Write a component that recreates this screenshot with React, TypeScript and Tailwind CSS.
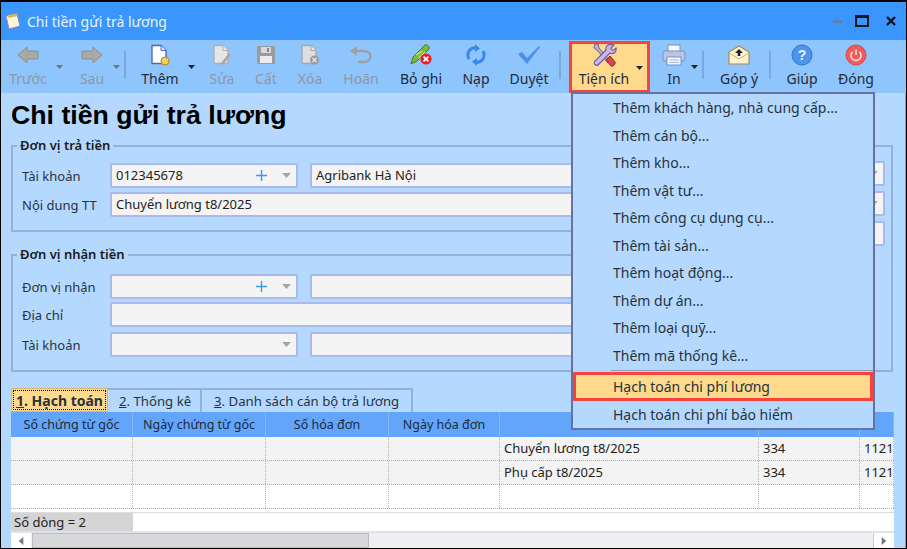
import type { ReactNode } from "react";

const GRAY = "#a3a3a3";

function ArrowIcon({ flip }: { flip?: boolean }) {
  return (
    <svg width="22" height="18" viewBox="0 0 22 18" className={flip ? "-scale-x-100" : ""}>
      <path d="M1 9 L10 1 V5 H21 V13 H10 V17 Z" fill="#a8a8a4" stroke="#8f8f8c" strokeWidth="1" />
    </svg>
  );
}

function DocIcon({ stroke, fill, children }: { stroke: string; fill: string; children?: ReactNode }) {
  return (
    <svg width="22" height="22" viewBox="0 0 22 22">
      <path d="M3 1.5 H12 L17 6.5 V19.5 H3 Z" fill={fill} stroke={stroke} strokeWidth="1.4" />
      <path d="M12 1.5 V6.5 H17" fill="#e8e8e8" stroke={stroke} strokeWidth="1" />
      {children}
    </svg>
  );
}

function FloppyIcon() {
  return (
    <svg width="20" height="20" viewBox="0 0 20 20">
      <rect x="1" y="1" width="18" height="18" rx="1" fill="#9b9b9b" />
      <rect x="5" y="2" width="10" height="6" fill="#d8d8d8" />
      <rect x="11" y="3" width="2" height="4" fill="#8a8a8a" />
      <rect x="4" y="11" width="12" height="7" fill="#ececec" />
    </svg>
  );
}

function UndoIcon() {
  return (
    <svg width="24" height="20" viewBox="0 0 24 20" fill="none">
      <path d="M3 6 H15 C24 6 23 17 15 17 H9" stroke="#a0a0a0" strokeWidth="2.4" />
      <path d="M1 6 L8 1 V11 Z" fill="#a0a0a0" />
    </svg>
  );
}

function SaveOffIcon() {
  return (
    <svg width="24" height="24" viewBox="0 0 24 24">
      <path d="M2 21 L4 14 L16 2 C18 1 21 4 20 6 L8 18 Z" fill="#7dbb36" stroke="#3f7d1c" strokeWidth="1" />
      <path d="M7 12 L13 8 M10 15 L16 9" stroke="#cfe88f" strokeWidth="1.2" />
      <circle cx="17" cy="16" r="5.6" fill="#e8202a" />
      <path d="M14.6 13.6 L19.4 18.4 M19.4 13.6 L14.6 18.4" stroke="#fff" strokeWidth="1.7" />
    </svg>
  );
}

function ReloadIcon() {
  return (
    <svg width="22" height="22" viewBox="0 0 22 22" fill="none">
      <path d="M4 15 C1 9 5 3 11 4" stroke="#3a88ea" strokeWidth="3" />
      <path d="M18 7 C21 13 17 19 11 18" stroke="#3a88ea" strokeWidth="3" />
      <path d="M10 0 L15 4.5 L10 8 Z M12 14 L7 17.5 L12 22 Z" fill="#3a88ea" />
    </svg>
  );
}

function CheckIcon() {
  return (
    <svg width="24" height="20" viewBox="0 0 24 20">
      <path d="M1 9 L5 7 L10 13 L22 1 L23 2 L10 19 Z" fill="#4a90e8" />
    </svg>
  );
}

function ToolsIcon() {
  return (
    <svg width="26" height="24" viewBox="0 0 26 24">
      <path d="M4 1 L7 1 L8 5 L19 18 L17 20 L6 7 L3 5 Z" fill="#b9b4d6" stroke="#6a5a9c" strokeWidth="1" />
      <path d="M15 17 L19 13 L24 19 C25 21 22 24 20 23 Z" fill="#d9454f" stroke="#8a2730" strokeWidth="1" />
      <path d="M23 2 L20 5 L21 7 L23 7 L25 5 C26 9 22 12 19 10 L8 21 C5 24 2 21 4 18 L15 7 C14 3 18 0 23 2 Z" fill="#c6b9e6" stroke="#6f5aa3" strokeWidth="1.1" />
    </svg>
  );
}

function PrinterIcon() {
  return (
    <svg width="24" height="22" viewBox="0 0 24 22">
      <rect x="6" y="1" width="12" height="7" fill="#f6f8fc" stroke="#7b8fc4" />
      <rect x="1" y="7" width="22" height="10" rx="2" fill="#b9c5e4" stroke="#7b8fc4" />
      <rect x="5" y="13" width="14" height="8" fill="#f6f8fc" stroke="#7b8fc4" />
      <path d="M7 16 H17 M7 18.500 H17" stroke="#a9b8da" />
    </svg>
  );
}

function EnvelopeIcon() {
  return (
    <svg width="22" height="20" viewBox="0 0 22 20">
      <path d="M1 7 L11 1 L21 7 V19 H1 Z" fill="#fdf3cf" stroke="#a78c52" strokeWidth="1.2" />
      <path d="M1 8 L11 14 L21 8" fill="none" stroke="#c9b27a" strokeWidth="1" />
      <path d="M11 4 L15 8 H12.300 V11 H9.700 V8 H7 Z" fill="#222" />
    </svg>
  );
}

function HelpIcon() {
  return (
    <svg width="22" height="22" viewBox="0 0 22 22">
      <circle cx="11" cy="11" r="10" fill="#4c94ec" stroke="#2f74cf" />
      <text x="11" y="16" textAnchor="middle" fontSize="14" fontFamily="Liberation Sans, sans-serif" fontWeight="700" fill="#e8f2ff">?</text>
    </svg>
  );
}

function PowerIcon() {
  return (
    <svg width="22" height="22" viewBox="0 0 22 22" fill="none">
      <circle cx="11" cy="11" r="10" fill="#ee5c5c" stroke="#d84545" />
      <path d="M7.600 7.800 A5 5 0 1 0 14.400 7.800" stroke="#ffe3e3" strokeWidth="1.500" />
      <path d="M11 5.500 V11" stroke="#ffe3e3" strokeWidth="1.500" />
    </svg>
  );
}

function Caret({ className, color = "#222" }: { className?: string; color?: string }) {
  return (
    <svg width="7" height="4" viewBox="0 0 7 4" className={className}>
      <path d="M0 0 H7 L3.500 4 Z" fill={color} />
    </svg>
  );
}

function Tool({
  label,
  icon,
  className,
  disabled,
  caretClass,
}: {
  label: string;
  icon: ReactNode;
  className: string;
  disabled?: boolean;
  caretClass?: string;
}) {
  return (
    <div className={`relative flex shrink-0 flex-col items-center ${className}`}>
      <div className="flex h-[26px] items-center pt-[3px]">{icon}</div>
      <span className={`mt-[4px] whitespace-nowrap text-[14px] leading-[18px] ${disabled ? "text-[#8c98a6]" : "text-[#1f2a36]"}`}>{label}</span>
      {caretClass && <Caret color={disabled ? "#6f7680" : "#222"} className={`absolute top-[25px] ${caretClass}`} />}
    </div>
  );
}

function Sep({ className }: { className: string }) {
  return <div className={`mt-[11px] h-[28px] w-[2px] shrink-0 bg-[#79a8dc] ${className}`} />;
}

function Toolbar() {
  return (
    <div className="flex h-[53px] shrink-0 bg-[#8fc5fd]">
      <Tool label="Trước" icon={<ArrowIcon />} className="w-[54px]" disabled caretClass="right-[-8px]" />
      <Tool label="Sau" icon={<ArrowIcon flip />} className="ml-[15px] w-[44px]" disabled caretClass="right-[-6px]" />
      <Sep className="ml-[10px]" />
      <Tool
        label="Thêm"
        icon={
          <DocIcon stroke="#4d69b8" fill="#fff">
            <circle cx="16" cy="17" r="4" fill="#f4cf5b" stroke="#a98a2a" />
          </DocIcon>
        }
        className="ml-[9px] w-[50px]"
        caretClass="right-[-10px]"
      />
      <Tool
        label="Sửa"
        icon={
          <DocIcon stroke="#b0b0b0" fill="#e6e6e6">
            <path d="M10 19 L18 9 L20 11 L12 21 Z" fill="#a8a8a8" />
          </DocIcon>
        }
        className="ml-[15px] w-[44px]"
        disabled
      />
      <Tool label="Cất" icon={<FloppyIcon />} className="w-[44px]" disabled />
      <Tool
        label="Xóa"
        icon={
          <DocIcon stroke="#a8a8a8" fill="#dedede">
            <circle cx="15.500" cy="16" r="4.500" fill="#9c9c9c" />
            <path d="M13.500 14 L17.500 18 M17.500 14 L13.500 18" stroke="#eee" strokeWidth="1.200" />
          </DocIcon>
        }
        className="w-[44px]"
        disabled
      />
      <Tool label="Hoãn" icon={<UndoIcon />} className="w-[58px]" disabled />
      <Tool label="Bỏ ghi" icon={<SaveOffIcon />} className="w-[62px]" />
      <Tool label="Nạp" icon={<ReloadIcon />} className="w-[48px]" />
      <Tool label="Duyệt" icon={<CheckIcon />} className="w-[58px]" />
      <Sep className="ml-px" />
      <div className="relative ml-[8px] mt-px flex w-[81px] shrink-0 flex-col items-center border-[3px] border-[#f9423f] bg-[#ffd98c] pr-[11px]">
        <div className="flex h-[22px] items-center">
          <ToolsIcon />
        </div>
        <span className="mt-[4px] whitespace-nowrap text-[14px] leading-[18px] text-[#1f2a36]">Tiện ích</span>
        <Caret className="absolute right-[4px] top-[22px]" />
      </div>
      <Tool label="In" icon={<PrinterIcon />} className="ml-[4px] w-[40px]" caretClass="right-[-4px]" />
      <Sep className="ml-[8px]" />
      <Tool label="Góp ý" icon={<EnvelopeIcon />} className="ml-[5px] w-[60px]" />
      <Sep className="" />
      <Tool label="Giúp" icon={<HelpIcon />} className="ml-[4px] w-[54px]" />
      <Tool label="Đóng" icon={<PowerIcon />} className="w-[54px]" />
    </div>
  );
}

function Field({ text, plus, caret, className }: { text?: string; plus?: boolean; caret?: boolean; className: string }) {
  return (
    <div className={`flex h-[25px] shrink-0 items-center rounded-[2px] border-2 border-[#a9b9ec] bg-[#f4f4f4] pl-[4px] text-[13px] text-[#222] ${className}`}>
      <span className="flex-1 truncate">{text}</span>
      {plus && (
        <svg width="11" height="11" viewBox="0 0 11 11" className="mr-[15px]">
          <path d="M5.500 0 V11 M0 5.500 H11" stroke="#3a9be8" strokeWidth="1.400" />
        </svg>
      )}
      {caret && <Caret color={GRAY} className="mr-[5px] h-[5px] w-[9px]" />}
    </div>
  );
}

function Label({ children }: { children: string }) {
  return <span className="w-[97px] shrink-0 pl-[9px] pt-[2px] text-[13px] text-[#27323d]">{children}</span>;
}

function Group({ title, className, children }: { title: string; className: string; children: ReactNode }) {
  return (
    <div className={`relative border-2 border-[#94b0e0] ${className}`}>
      <span className="absolute left-[4px] top-[-12px] bg-[#b5d9fe] px-[3px] text-[13px] font-semibold leading-[20px] text-[#1a1a1a]">{title}</span>
      {children}
    </div>
  );
}

const cols = ["Số chứng từ gốc", "Ngày chứng từ gốc", "Số hóa đơn", "Ngày hóa đơn", "", "", ""];
const rows = [
  ["", "", "", "", "Chuyển lương t8/2025", "334", "1121"],
  ["", "", "", "", "Phụ cấp t8/2025", "334", "1121"],
];
const gridCols = "grid grid-cols-[122px_133px_123px_111px_259px_101px_34px]";

function DataGrid() {
  return (
    <div className="flex w-[883px] flex-col bg-white">
      <div className={`${gridCols} h-[25px] bg-[#62a5fb]`}>
        {cols.map((c, i) => (
          <div key={i} className="truncate border-r border-[#86b6ee] text-center text-[12.500px] leading-[25px] text-[#1d2a3a]">
            {c}
          </div>
        ))}
      </div>
      {[...rows, ["", "", "", "", "", "", ""]].map((r, i) => (
        <div key={i} className={`${gridCols} h-[24px] border-b border-dotted border-[#aaa] ${i < 2 ? "bg-[#f3f3f3]" : "bg-white"}`}>
          {r.map((c, j) => (
            <div key={j} className="whitespace-nowrap border-r border-dotted border-[#b5b5b5] pl-[4px] text-[13px] leading-[23px] text-[#222]">
              {c}
            </div>
          ))}
        </div>
      ))}
      <div className="mt-[3px] flex h-[19px] border-t border-[#ddd] bg-white">
        <div className="w-[122px] bg-[#d4d4d4] pl-[3px] text-[13px] leading-[18px] text-[#222]">Số dòng = 2</div>
      </div>
      <div className="flex h-[17px] border-t-2 border-[#dbe4ee] bg-[#efefef]">
        <div className="flex w-[20px] items-center justify-center bg-white">
          <Caret color="#777" className="h-[6px] w-[8px] rotate-90" />
        </div>
        <div className="ml-px w-[337px] border border-[#bdbdbd] bg-[#d8d8d8]" />
        <div className="flex-1" />
        <div className="flex w-[21px] items-center justify-center border-l border-[#ccc] bg-white">
          <Caret color="#777" className="h-[6px] w-[8px] -rotate-90" />
        </div>
      </div>
    </div>
  );
}

const menuItems = [
  "Thêm khách hàng, nhà cung cấp...",
  "Thêm cán bộ...",
  "Thêm kho...",
  "Thêm vật tư...",
  "Thêm công cụ dụng cụ...",
  "Thêm tài sản...",
  "Thêm hoạt động...",
  "Thêm dự án...",
  "Thêm loại quỹ...",
  "Thêm mã thống kê...",
];

function DropMenu() {
  return (
    <div className="absolute left-[570px] top-[90px] flex h-[338px] w-[304px] flex-col border-2 border-[#66739f] bg-[#b5d9fe] text-[14px] text-[#27323d]">
      {menuItems.map((m) => (
        <div key={m} className="flex h-[27.500px] shrink-0 items-center pl-[40px]">
          {m}
        </div>
      ))}
      <div className="ml-[38px] mt-px h-px shrink-0 bg-[#8e9bb0]" />
      <div className="mt-px flex h-[29px] shrink-0 items-center border-[3px] border-[#f9423f] bg-[#ffd98c] pl-[37px]">Hạch toán chi phí lương</div>
      <div className="flex h-[26px] shrink-0 items-center pl-[40px]">Hạch toán chi phí bảo hiểm</div>
    </div>
  );
}

export default function App() {
  return (
    <div
      className="relative flex h-[549px] w-[907px] flex-col overflow-hidden border-x border-b border-t-2 border-black bg-[#b5d9fe]"
      style={{ fontFamily: '"Noto Sans", sans-serif' }}
    >
      {/* Title bar */}
      <div className="flex h-[38px] shrink-0 items-center bg-[#3a96fd] pl-[4px] text-[#eaf3ff]">
        <svg width="16" height="17" viewBox="0 0 16 17">
          <path d="M1 3 L12 1 L15 13 L4 16 Z" fill="#fdf6d8" stroke="#8f83c9" />
          <path d="M3 2 L12 0.500 L12.500 3 L3.500 5 Z" fill="#d9b84a" />
        </svg>
        <span className="ml-[6px] text-[14px]">Chi tiền gửi trả lương</span>
        <div className="ml-auto flex items-center">
          <div className="h-[3px] w-[9px] bg-[#5f7fa6]" />
          <div className="ml-[13px] h-[12px] w-[14px] border-2 border-t-[3px] border-[#10161f]" />
          <svg width="10" height="10" viewBox="0 0 10 10" className="ml-[17px] mr-[10px]">
            <path d="M1 1 L9 9 M9 1 L1 9" stroke="#0d1116" strokeWidth="2.400" />
          </svg>
        </div>
      </div>

      <Toolbar />

      {/* Form */}
      <div className="flex min-h-0 flex-1 flex-col border-r border-[#7c9bcb] pl-[10px]">
        <h1 className="h-[52px] shrink-0 pt-[5px] text-[26.700px] font-bold leading-[34px] text-black" style={{ fontFamily: '"Liberation Sans", sans-serif' }}>
          Chi tiền gửi trả lương
        </h1>

        <div className="flex h-[227px] shrink-0 gap-[4px]">
          <div className="flex w-[700px] shrink-0 flex-col">
            <Group title="Đơn vị trả tiền" className="h-[87px] pt-[16px]">
              <div className="flex items-center">
                <Label>Tài khoản</Label>
                <Field text="012345678" plus caret className="w-[188px]" />
                <Field text="Agribank Hà Nội" className="ml-[12px] w-[380px]" />
              </div>
              <div className="mt-[4px] flex items-center">
                <Label>Nội dung TT</Label>
                <Field text="Chuyển lương t8/2025" className="w-[580px]" />
              </div>
            </Group>
            <Group title="Đơn vị nhận tiền" className="mt-[22px] h-[118px] pt-[18px]">
              <div className="flex items-center">
                <Label>Đơn vị nhận</Label>
                <Field plus caret className="w-[188px]" />
                <Field className="ml-[12px] w-[380px]" />
              </div>
              <div className="mt-[3px] flex items-center">
                <Label>Địa chỉ</Label>
                <Field className="w-[580px]" />
              </div>
              <div className="mt-[5px] flex items-center">
                <Label>Tài khoản</Label>
                <Field caret className="w-[188px]" />
                <Field className="ml-[12px] w-[380px]" />
              </div>
            </Group>
          </div>
          <div className="flex w-[178px] shrink-0 flex-col gap-[5px] border-2 border-[#94b0e0] pr-[6px] pt-[14px]">
            <Field caret className="w-full" />
            <Field caret className="w-full" />
            <Field className="w-full" />
          </div>
        </div>

        {/* Tabs */}
        <div className="mt-[16px] flex h-[24px] shrink-0 text-[13.200px] leading-[22px] text-[#27323d]">
          <div className="w-[97px] border border-[#d9b66a] bg-[#ffd98c] p-px text-[14px] font-bold">
            <div className="h-full border border-dotted border-black pl-[2px] leading-[19px]">
              <span className="underline">1</span>. Hạch toán
            </div>
          </div>
          <div className="w-[94px] border-r-2 border-t-2 border-[#94b0e0] pl-[11px]">
            <span className="underline">2</span>. Thống kê
          </div>
          <div className="w-[211px] border-r-2 border-t-2 border-[#94b0e0] pl-[12px]">
            <span className="underline">3</span>. Danh sách cán bộ trả lương
          </div>
        </div>

        <DataGrid />
      </div>

      <DropMenu />
    </div>
  );
}
